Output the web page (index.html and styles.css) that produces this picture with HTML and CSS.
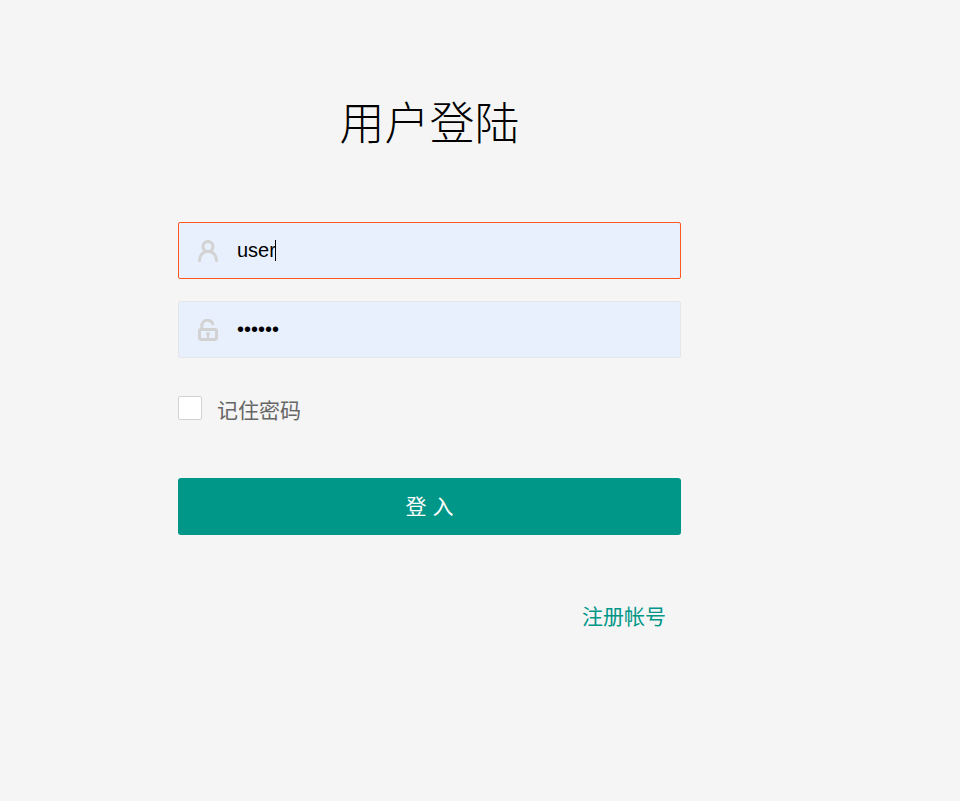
FILE: index.html
```html
<!DOCTYPE html>
<html lang="zh-CN">
<head>
  <meta charset="UTF-8">
  <meta name="viewport" content="width=device-width, initial-scale=1.0">
  <title>用户登陆</title>
  <link rel="stylesheet" href="styles.css">
</head>
<body>
  <form class="login-form">
    <h1 class="login-title">用户登陆</h1>

    <!-- 用户名 -->
    <div class="field field-active">
      <svg class="field-icon" viewBox="0 0 20 22" fill="none" stroke="#d2d2d2" stroke-width="3" stroke-linecap="round">
        <circle cx="10" cy="6.500" r="5"/>
        <path d="M1.500 20.500c0-4.500 3-8 6.500-9M18.500 20.500c0-4.500-3-8-6.500-9"/>
      </svg>
      <input class="field-input" type="text" value="user">
      <span class="caret"></span>
    </div>

    <!-- 密码 -->
    <div class="field">
      <svg class="field-icon" viewBox="0 0 20 22" fill="none" stroke="#d2d2d2" stroke-width="3">
        <path d="M3.800 10V7a5.700 5.700 0 0 1 11-2.200" stroke-linecap="round"/>
        <rect x="1.500" y="10.500" width="17" height="10" rx="1.500"/>
        <path d="M10 15v4" stroke-width="2"/>
        <circle cx="10" cy="15" r="2" fill="#d2d2d2" stroke="none"/>
      </svg>
      <input class="field-input" type="password" value="123456">
    </div>

    <label class="remember">
      <span class="checkbox"></span>
      <span class="remember-text">记住密码</span>
    </label>

    <button class="login-btn" type="button">登 入</button>

    <div class="links">
      <a class="register-link" href="#">注册帐号</a>
    </div>
  </form>
</body>
</html>
```

FILE: styles.css
```css
body {
  margin: 0;
  padding: 0;
  background: #f5f5f5;
  font-family: "Liberation Sans", "Noto Sans CJK SC", sans-serif;
}

.login-form {
  width: 503px;
  margin-left: 178px;
  padding-top: 94px;
}

.login-title {
  margin: 0 0 66px;
  height: 62px;
  line-height: 62px;
  font-size: 45px;
  font-weight: 300;
  color: #000;
  text-align: center;
}

/* 输入框 */
.field {
  position: relative;
  display: flex;
  align-items: center;
  box-sizing: border-box;
  height: 57px;
  margin-bottom: 22px;
  padding-left: 19px;
  background: #e8f0fe;
  border: 1px solid #e6e6e6;
  border-radius: 2px;
}

.field-active {
  border-color: #ff5722;
}

.field-icon {
  width: 20px;
  height: 22px;
  flex-shrink: 0;
}

.field-input {
  flex: 1;
  min-width: 0;
  margin-left: 19px;
  padding: 0;
  border: 0;
  outline: 0;
  background: transparent;
  font-family: inherit;
  font-size: 20px;
  color: #000;
  caret-color: transparent;
}

.caret {
  position: absolute;
  left: 96px;
  top: 17px;
  width: 1px;
  height: 21px;
  background: #000;
}

/* 记住密码 */
.remember {
  display: flex;
  align-items: center;
  margin-top: 38px;
  height: 24px;
  font-size: 21px;
  color: #666;
}

.remember-text {
  margin-left: 15px;
  padding-top: 2px;
}

.checkbox {
  box-sizing: border-box;
  width: 24px;
  height: 24px;
  background: #fff;
  border: 1px solid #d2d2d2;
  border-radius: 2px;
}

/* 按钮 */
.login-btn {
  display: block;
  width: 100%;
  height: 57px;
  margin-top: 58px;
  padding: 0 0 3px;
  border: 0;
  border-radius: 3px;
  background: #009688;
  color: #fff;
  font-family: inherit;
  font-size: 21px;
}

.links {
  display: flex;
  justify-content: flex-end;
  margin-top: 67px;
  padding-right: 15px;
}

.register-link {
  font-size: 21px;
  line-height: 30px;
  color: #009688;
  text-decoration: none;
}
```
